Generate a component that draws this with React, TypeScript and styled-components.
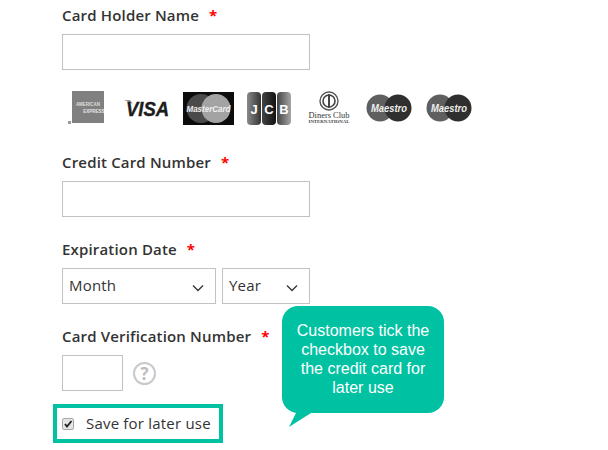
import React from 'react';
import styled, { createGlobalStyle } from 'styled-components';

const Global = createGlobalStyle`
  html, body { margin: 0; padding: 0; background: #fff; }
  body { font-family: 'Open Sans', sans-serif; color: #333; overflow: hidden; }
`;

const Page = styled.div`
  position: relative;
  width: 608px;
  height: 450px;
  padding: 7px 0 0 62px;
  box-sizing: border-box;
`;

const Field = styled.div<{ $gap?: number }>`
  display: flex;
  flex-direction: column;
  margin-bottom: ${(p) => p.$gap ?? 24}px;
`;

const Label = styled.div`
  height: 18px;
  line-height: 16px;
  margin-bottom: 9px;
  font-size: 15px;
  font-weight: 600;
  letter-spacing: 0.17px;
  color: #333;
`;

const Star = styled.span`
  margin-left: 10px;
  color: #f00;
  font-size: 15px;
  font-weight: 700;
`;

const TextInput = styled.div<{ $w: number }>`
  width: ${(p) => p.$w}px;
  height: 36px;
  box-sizing: border-box;
  border: 1px solid #c2c2c2;
  background: #fff;
`;

const Row = styled.div`
  display: flex;
  align-items: center;
`;

const SelectRow = styled(Row)`
  gap: 6px;
`;

const Select = styled.div<{ $w: number }>`
  width: ${(p) => p.$w}px;
  height: 36px;
  box-sizing: border-box;
  border: 1px solid #c2c2c2;
  padding: 0 11px 3px 6px;
  display: flex;
  align-items: center;
  justify-content: space-between;
  font-size: 15px;
  letter-spacing: 0.2px;
  color: #333;

  svg {
    margin-top: 7px;
  }
`;

const Cards = styled.div`
  display: flex;
  align-items: center;
  height: 34px;
  margin: 21px 0 29px 6px;
`;

const Help = styled.div`
  width: 23px;
  height: 23px;
  margin-left: 10px;
  box-sizing: border-box;
  border: 2px solid #c9c9c9;
  border-radius: 50%;
  display: flex;
  align-items: center;
  justify-content: center;
  color: #bdbdbd;
  font-size: 17px;
  font-weight: 700;
`;

const SaveBox = styled.div`
  width: 170px;
  height: 39px;
  margin: -1px 0 0 -9px;
  box-sizing: border-box;
  border: 4px solid #00c2a2;
  display: flex;
  align-items: center;
  padding: 0 0 2px 5px;
  font-size: 15px;
  letter-spacing: 0.2px;
  color: #333;
`;

const Check = styled.div`
  width: 12px;
  height: 12px;
  margin: 2px 12px 0 0;
  box-sizing: border-box;
  border: 1px solid #a9a9a9;
  border-radius: 2px;
  background: #e4e4e4;
  display: flex;
`;

const Bubble = styled.div`
  position: absolute;
  left: 282px;
  top: 306px;
  width: 162px;
  height: 107px;
  box-sizing: border-box;
  padding: 15px 6px 0;
  background: #00c2a2;
  border-radius: 16px;
  color: #fff;
  font-family: 'Liberation Sans', Arial, sans-serif;
  font-size: 16px;
  line-height: 19px;
  text-align: center;
`;

const Tail = styled.svg`
  position: absolute;
  left: 7px;
  top: 105px;
`;

const Chevron = () => (
  <svg width="12" height="8" viewBox="0 0 12 8">
    <path d="M1 1.5 L6 6.5 L11 1.5" fill="none" stroke="#333" strokeWidth="1.3" />
  </svg>
);

const Amex = () => (
  <svg width="36" height="34" viewBox="0 0 36 34" style={{ marginRight: 20 }}>
    <rect x="4" y="0" width="32" height="32" fill="#808080" />
    <rect x="0" y="30" width="3" height="3" fill="#999" />
    <text x="20" y="15" fontSize="4.5" fill="#ddd" textAnchor="middle" fontFamily="Liberation Sans" fontWeight="700">AMERICAN</text>
    <text x="26" y="22" fontSize="4.5" fill="#e8e8e8" textAnchor="middle" fontFamily="Liberation Sans" fontWeight="700">EXPRESS</text>
  </svg>
);

const Visa = () => (
  <svg width="46" height="34" viewBox="0 0 46 34" style={{ marginRight: 13 }}>
    <path d="M0 9 H6 L9 13 Z" fill="#999" />
    <text x="2" y="25" fontSize="21" fontWeight="700" fontStyle="italic" fill="#1c1c1c" stroke="#1c1c1c" strokeWidth="0.4" fontFamily="Liberation Sans" transform="translate(0.2 0) scale(0.88 1)">VISA</text>
  </svg>
);

const MasterCard = () => (
  <svg width="51" height="33" viewBox="0 0 51 33" style={{ marginRight: 13 }}>
    <rect width="51" height="33" fill="#0c0c0c" />
    <circle cx="18" cy="16.5" r="14.5" fill="#4a4a4a" />
    <circle cx="33" cy="16.5" r="14.5" fill="#a3a3a3" />
    <text x="25.5" y="20" fontSize="8.5" fontStyle="italic" fontWeight="700" fill="#f0f0f0" textAnchor="middle" fontFamily="Liberation Sans" textLength="44" lengthAdjust="spacingAndGlyphs">MasterCard</text>
  </svg>
);

const Jcb = () => (
  <svg width="44" height="33" viewBox="0 0 44 33" style={{ marginRight: 17 }}>
    <defs>
      <linearGradient id="jcbA" x1="0" x2="1">
        <stop offset="0" stopColor="#8a8a8a" />
        <stop offset="1" stopColor="#333" />
      </linearGradient>
      <linearGradient id="jcbB" x1="0" x2="1">
        <stop offset="0" stopColor="#444" />
        <stop offset="1" stopColor="#111" />
      </linearGradient>
      <linearGradient id="jcbC" x1="0" x2="1">
        <stop offset="0" stopColor="#444" />
        <stop offset="1" stopColor="#a5a5a5" />
      </linearGradient>
    </defs>
    <rect x="0" y="0" width="14" height="33" rx="4" fill="url(#jcbA)" />
    <rect x="15" y="0" width="14" height="33" rx="4" fill="url(#jcbB)" />
    <rect x="30" y="0" width="14" height="33" rx="4" fill="url(#jcbC)" />
    <text x="7" y="22" fontSize="13" fontWeight="700" fill="#fff" textAnchor="middle" fontFamily="Liberation Sans">J</text>
    <text x="22" y="22" fontSize="13" fontWeight="700" fill="#fff" textAnchor="middle" fontFamily="Liberation Sans">C</text>
    <text x="37" y="22" fontSize="13" fontWeight="700" fill="#fff" textAnchor="middle" fontFamily="Liberation Sans">B</text>
  </svg>
);

const Diners = () => (
  <svg width="42" height="34" viewBox="0 0 42 34" style={{ marginRight: 16 }}>
    <circle cx="21" cy="10" r="9" fill="#fff" stroke="#555" strokeWidth="1.4" />
    <circle cx="21" cy="10" r="6" fill="none" stroke="#444" strokeWidth="1.6" />
    <rect x="20" y="3" width="2" height="14" fill="#444" />
    <text x="21" y="27" fontSize="8.5" fill="#333" textAnchor="middle" fontFamily="Liberation Serif" textLength="41" lengthAdjust="spacingAndGlyphs">Diners Club</text>
    <text x="21" y="32" fontSize="4.2" fontWeight="700" fill="#444" textAnchor="middle" fontFamily="Liberation Serif" textLength="41" lengthAdjust="spacingAndGlyphs">INTERNATIONAL</text>
  </svg>
);

const Maestro = ({ last }: { last?: boolean }) => (
  <svg width="46" height="28" viewBox="0 0 46 28" style={{ marginRight: last ? 0 : 14 }}>
    <circle cx="14" cy="14" r="13.5" fill="#5f5f5f" />
    <circle cx="32" cy="14" r="13.5" fill="#2f2f2f" />
    <text x="23" y="17.5" fontSize="10.5" fontStyle="italic" fontWeight="700" fill="#eee" textAnchor="middle" fontFamily="Liberation Sans" textLength="36" lengthAdjust="spacingAndGlyphs">Maestro</text>
  </svg>
);

export default function App() {
  return (
    <Page>
      <Global />
      <Field $gap={0}>
        <Label>Card Holder Name<Star>*</Star></Label>
        <TextInput $w={248} />
      </Field>

      <Cards>
        <Amex />
        <Visa />
        <MasterCard />
        <Jcb />
        <Diners />
        <Maestro />
        <Maestro last />
      </Cards>

      <Field>
        <Label>Credit Card Number<Star>*</Star></Label>
        <TextInput $w={248} />
      </Field>

      <Field>
        <Label>Expiration Date<Star>*</Star></Label>
        <SelectRow>
          <Select $w={154}>Month<Chevron /></Select>
          <Select $w={88}>Year<Chevron /></Select>
        </SelectRow>
      </Field>

      <Field $gap={14}>
        <Label>Card Verification Number<Star>*</Star></Label>
        <Row>
          <TextInput $w={61} />
          <Help>?</Help>
        </Row>
      </Field>

      <SaveBox>
        <Check>
          <svg width="10" height="10" viewBox="0 0 10 10">
            <path d="M2 5 L4 7.5 L8.5 2" fill="none" stroke="#222" strokeWidth="1.8" />
          </svg>
        </Check>
        Save for later use
      </SaveBox>

      <Bubble>
        Customers tick the checkbox to save the credit card for later use
        <Tail width="32" height="18" viewBox="0 0 32 18">
          <path d="M8 0 L0 16 L22 2 Z" fill="#00c2a2" />
        </Tail>
      </Bubble>
    </Page>
  );
}
